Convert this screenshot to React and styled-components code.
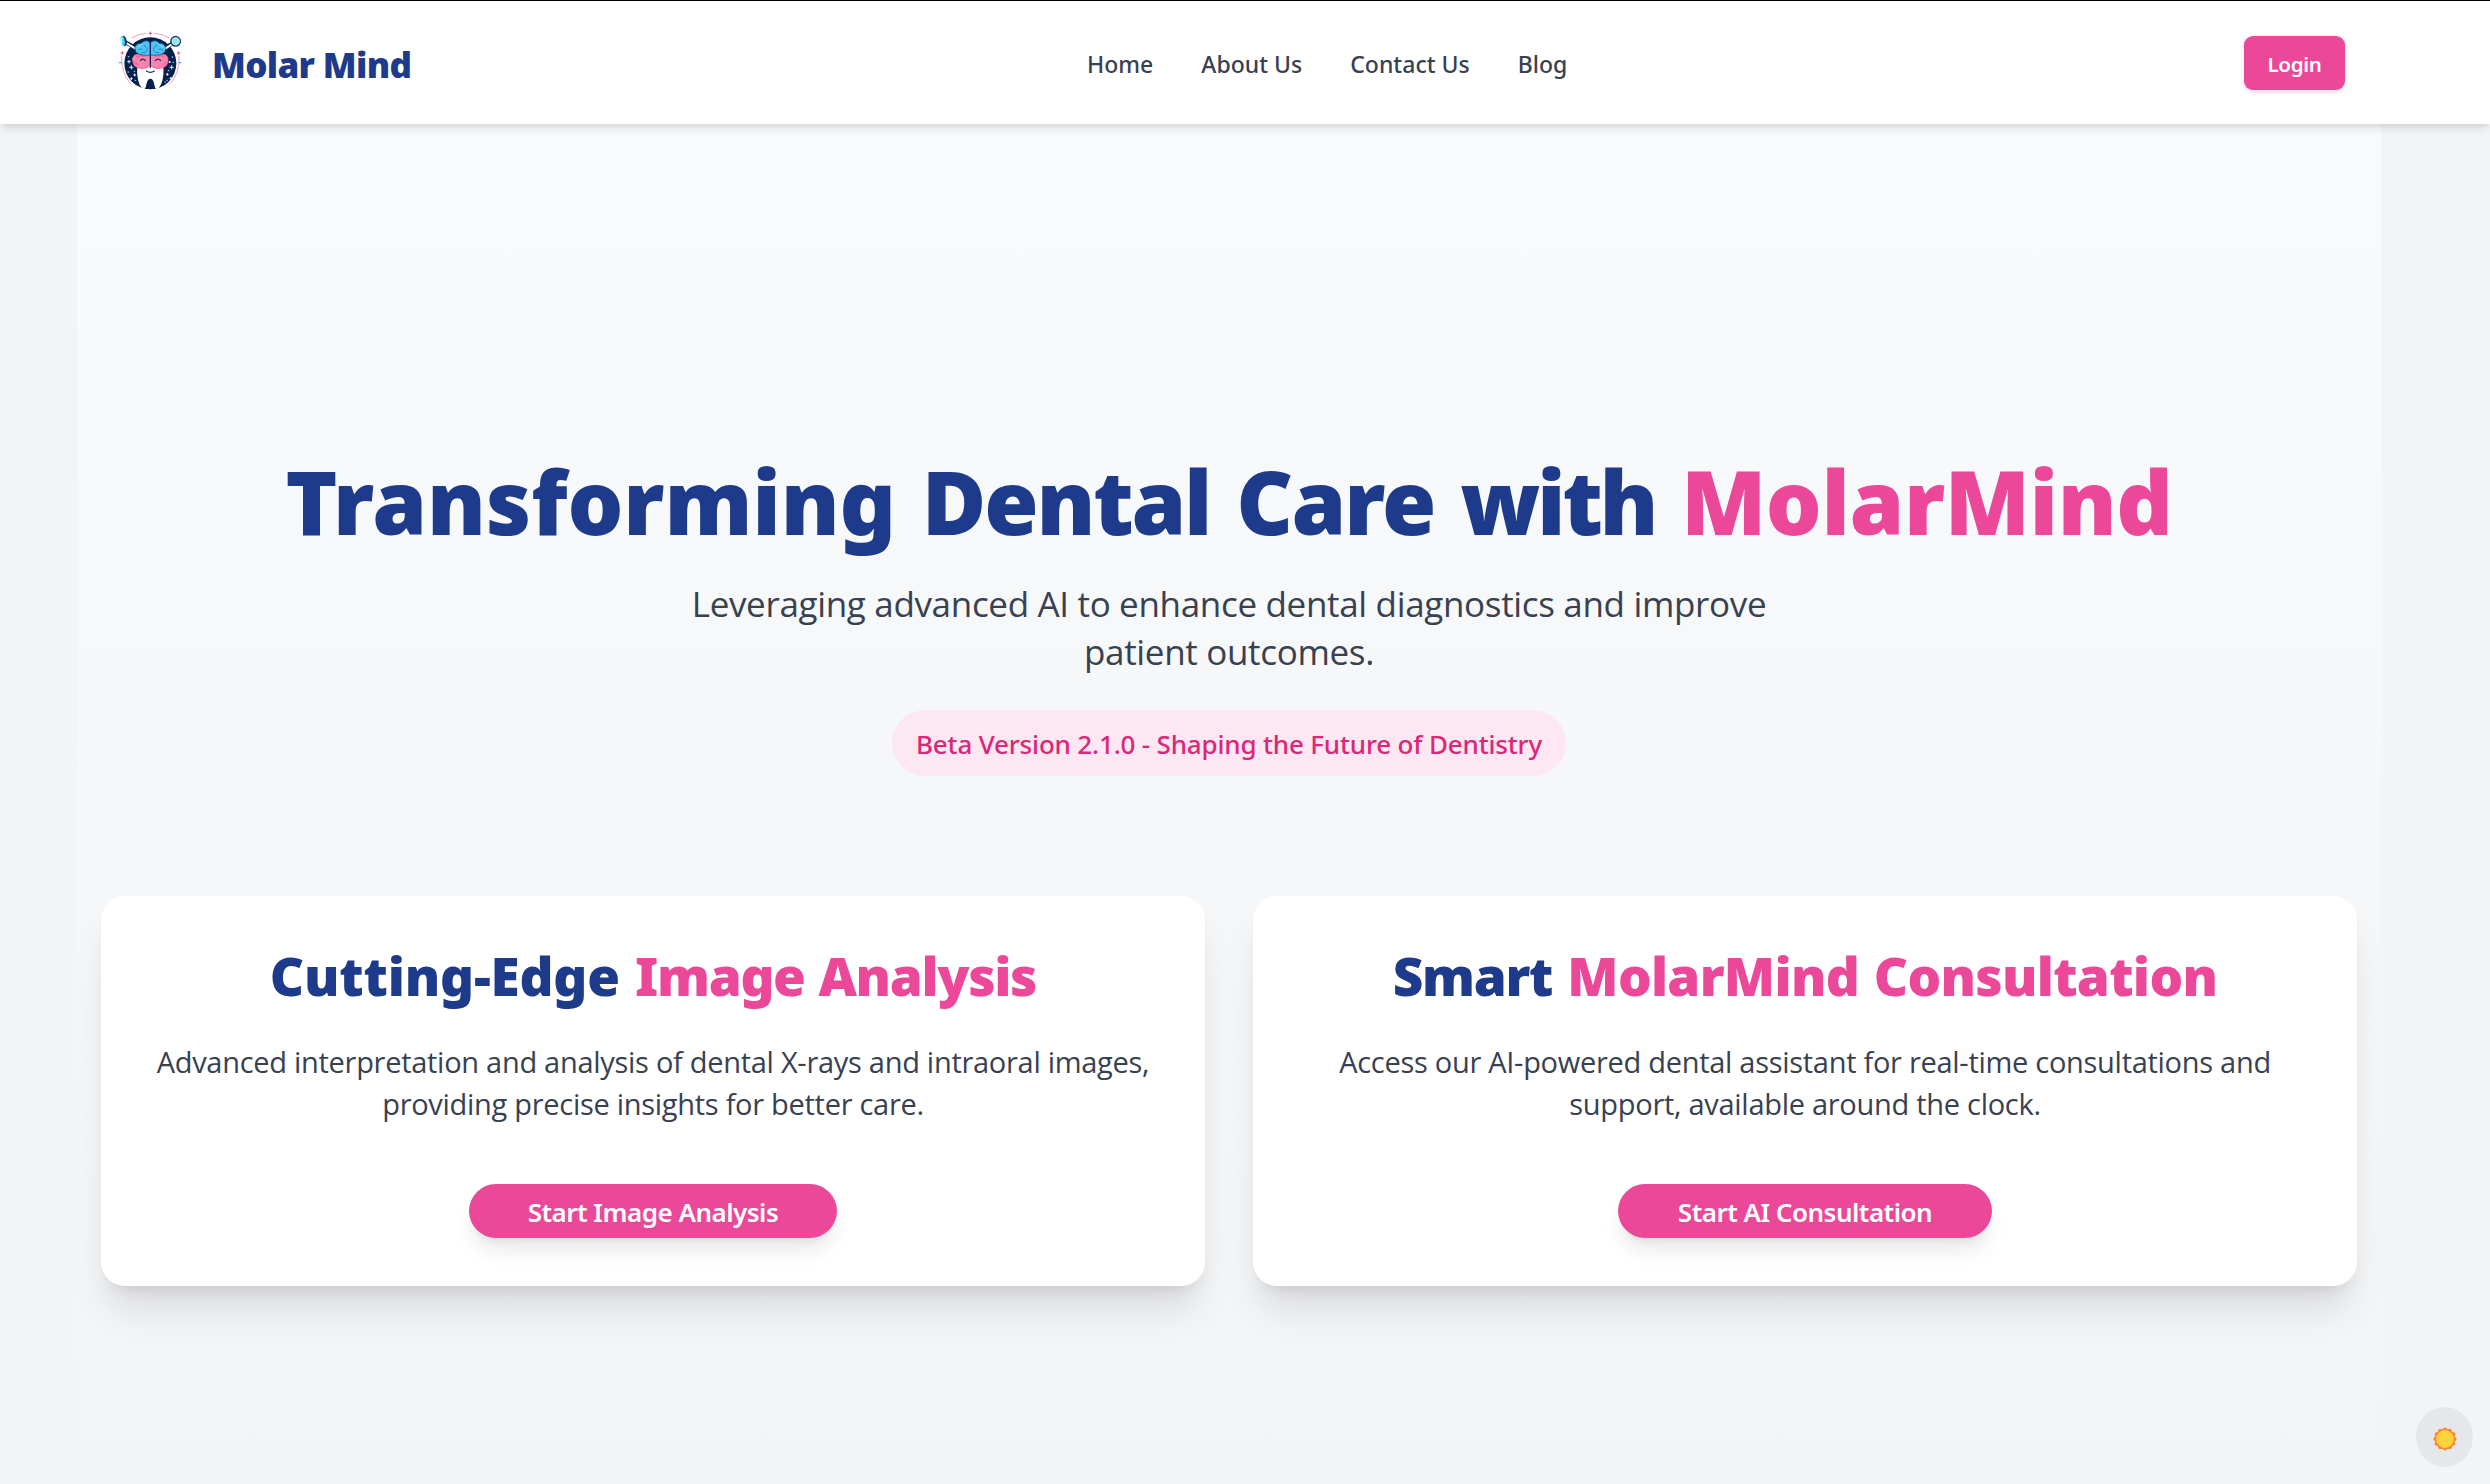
import React from "react";
import styled, { createGlobalStyle } from "styled-components";

const blue = "#1e3a8a";
const pink = "#ec4899";
const slate = "#374151";
const strong = '"Noto Sans", "Open Sans", sans-serif';
const regular = '"Open Sans", "Noto Sans", sans-serif';

const GlobalStyle = createGlobalStyle`
  *, *::before, *::after { box-sizing: border-box; }
  body { margin: 0; background: #f3f4f6; font-family: ${regular}; overflow: hidden; }
`;

const Page = styled.div`
  display: flex;
  flex-direction: column;
  height: 1484px;
  overflow: hidden;
  background: #f3f4f6;
`;

const Header = styled.header`
  z-index: 1;
  flex: none;
  height: 124px;
  border-top: 1px solid #000;
  padding: 0 145px 0 113px;
  display: grid;
  grid-template-columns: 974px 1fr auto;
  align-items: center;
  background: #fff;
  box-shadow: 0 6px 9px -1.5px rgba(0, 0, 0, 0.1), 0 3px 6px -3px rgba(0, 0, 0, 0.1);
`;

const Brand = styled.a`
  display: flex;
  align-items: center;
  gap: 24px;
`;

const LogoMark = styled.svg`
  width: 75px;
  height: 64px;
  margin-bottom: 6px;
`;

const BrandName = styled.span`
  padding-top: 5px;
  color: ${blue};
  font: 900 35px/42px ${strong};
  letter-spacing: -0.66px;
  white-space: nowrap;
`;

const Nav = styled.nav`
  display: flex;
  gap: 48px;
  padding-top: 2px;
`;

const NavLink = styled.a`
  color: ${slate};
  font: 500 23px/36px ${strong};
  letter-spacing: 0.02px;
  white-space: nowrap;
`;

const LoginButton = styled.button`
  width: 101px;
  height: 54px;
  padding: 2px 0 0;
  border: 0;
  border-radius: 9px;
  background: ${pink};
  color: #fff;
  font: 600 20.5px/30px ${strong};
  letter-spacing: -0.3px;
  box-shadow: 0 1.5px 4px rgba(0, 0, 0, 0.14);
`;

const Main = styled.main`
  width: 2304px;
  height: 1360px;
  margin-left: 77px;
  padding: 332px 24px 0;
  background: linear-gradient(to bottom, #f9fafb, #f3f4f6);
`;

const Hero = styled.section`
  display: flex;
  flex-direction: column;
  align-items: center;
  text-align: center;
`;

const Word = styled.span`
  color: ${(p) => (p.$accent ? pink : blue)};
  letter-spacing: ${(p) => p.$track}px;
`;

const Title = styled.h1`
  margin: 0;
  color: ${blue};
  font: 900 88px/90px ${strong};
  word-spacing: 3px;
  white-space: nowrap;
`;

const Lead = styled.p`
  width: 1152px;
  margin: 34px 0 0;
  color: ${slate};
  font: 400 35px/48px ${regular};
  letter-spacing: -0.33px;
`;

const Badge = styled.div`
  height: 66px;
  margin-top: 34px;
  padding: 12px 24px;
  border-radius: 33px;
  background: #fce7f3;
  color: #db2777;
  font: 500 26px/44px ${strong};
  letter-spacing: -0.17px;
  white-space: nowrap;
`;

const Cards = styled.section`
  display: grid;
  grid-template-columns: 1fr 1fr;
  gap: 48px;
  margin-top: 120px;
`;

const Card = styled.article`
  display: flex;
  flex-direction: column;
  align-items: center;
  height: 390px;
  padding: 50px 48px 0;
  border-radius: 24px;
  background: #fff;
  text-align: center;
  box-shadow: 0 30px 37.5px -7.5px rgba(0, 0, 0, 0.1), 0 12px 15px -9px rgba(0, 0, 0, 0.1);
`;

const CardTitle = styled.h2`
  margin: 0;
  color: ${blue};
  font: 900 53px/60px ${strong};
  word-spacing: 1.5px;
  white-space: nowrap;
`;

const CardText = styled.p`
  margin: 35px 0 0;
  color: ${slate};
  font: 400 29px/42px ${regular};
  letter-spacing: -0.285px;
  white-space: nowrap;
`;

const CardButton = styled.button`
  width: ${(p) => p.$width}px;
  height: 54px;
  margin-top: 58.5px;
  padding: 3px 0 0;
  border: 0;
  border-radius: 27px;
  background: ${pink};
  color: #fff;
  font: 600 26px/42px ${strong};
  letter-spacing: -0.5px;
  white-space: nowrap;
  box-shadow: 0 15px 22.5px -4.5px rgba(0, 0, 0, 0.1), 0 6px 9px -6px rgba(0, 0, 0, 0.1);
`;

const ThemeToggle = styled.button`
  position: fixed;
  right: 17px;
  bottom: 17px;
  z-index: 2;
  display: flex;
  align-items: center;
  justify-content: center;
  width: 57px;
  height: 60px;
  padding: 3px 0 0;
  border: 0;
  border-radius: 50%;
  background: #e5e7eb;
`;

const star = (x, y, r = 4) => `M${x - r} ${y}H${x + r}M${x} ${y - r}V${y + r}`;

function Logo() {
  return (
    <LogoMark viewBox="-9 0 225 192" fill="none" strokeLinecap="round" strokeLinejoin="round">
      <g stroke="#f08cab" strokeWidth="2.5">
        <path d="M48 29Q66 18 90 16M116 16Q140 18 158 29M17 84Q14 134 44 168M189 84Q192 134 162 168" />
        <path d={star(103, 16) + star(19, 75) + star(188, 75)} stroke="#e8578b" strokeWidth="3" />
      </g>
      <circle cx="103" cy="106" r="78" fill="#04204c" />
      <path d="M10 104h7M188 104h7" stroke="#35cbe8" strokeWidth="4" />
      <path d="M31 44L54 57M174 44L151 57" stroke="#04204c" strokeWidth="12" />
      <path d="M33 46L57 61M172 46L149 61" stroke="#fff" strokeWidth="6" />
      <ellipse cx="24" cy="39" rx="8" ry="16" fill="#0b3562" transform="rotate(-8 24 39)" />
      <ellipse cx="20" cy="39" rx="6" ry="15" fill="#58d5f2" transform="rotate(-8 20 39)" />
      <path d="M16 32v14" stroke="#d5f7ff" strokeWidth="4" />
      <circle cx="179" cy="40" r="14" fill="#8ce6f6" stroke="#173d68" strokeWidth="5" />
      <circle cx="179" cy="40" r="11" stroke="#d3f7fc" strokeWidth="2" />
      <path
        d="M64 118C61 147 70 182 84 183C94 183 90 155 103 154C116 155 112 183 122 183C136 181 145 147 142 118Q103 106 64 118Z"
        fill="#fff"
      />
      <path d="M88 183C92 168 93 153 103 152C114 153 114 169 118 183Z" fill="#04204c" />
      <path
        d="M102 76C86 78 71 76 57 80C46 87 48 106 57 115C70 124 91 124 102 113ZM104 76C120 78 135 76 149 80C160 87 158 106 149 115C136 124 115 124 104 113Z"
        fill="#fb83ad"
        stroke="#d94f86"
        strokeWidth="2"
      />
      <path d="M53 101Q61 105 65 111M153 101Q145 105 141 111M62 86Q75 80 88 85M144 86Q131 80 118 85" stroke="#ee6598" strokeWidth="3.5" />
      <path
        d="M102 44C94 34 80 39 76 46C63 45 53 56 58 66C58 78 78 84 102 81ZM104 44C112 34 126 39 130 46C143 45 153 56 148 66C148 78 128 84 104 81Z"
        fill="#4fc4f3"
        stroke="#0a3d70"
        strokeWidth="2"
      />
      <path d="M66 66Q71 59 78 64M75 51Q86 47 88 56M78 74Q90 76 93 68V59M140 66Q135 59 128 64M131 51Q120 47 118 56M128 74Q116 76 113 68V59" stroke="#0b82c2" strokeWidth="2.5" />
      <path d="M67 56Q72 49 80 49M126 49Q136 50 140 58" stroke="#96ebff" strokeWidth="3" />
      <path d="M103 40V119" stroke="#062653" strokeWidth="3.5" />
      <path d="M73 98Q80 89 88 98M118 98Q126 89 134 98" stroke="#2b2454" strokeWidth="3.5" />
      <path d="M91 129Q103 137 115 129" stroke="#17345b" strokeWidth="3.5" />
      <path
        d={star(39, 101) + star(46, 118, 5) + star(46, 152, 3) + star(56, 141, 3) + star(167, 118, 5) + star(161, 102, 2) + star(154, 139, 3) + star(165, 151, 3)}
        stroke="#e8f3fb"
        strokeWidth="3"
      />
      <path d="M37 86h1M50 93h1M36 132h1M55 130h1M58 157h1M169 87h1M171 103h1M153 157h1M147 162h1M157 128h1" stroke="#a8c2dc" strokeWidth="4" />
    </LogoMark>
  );
}

function Sun() {
  const rays = Array.from({ length: 12 }, (_, i) => (i * Math.PI) / 6);
  return (
    <svg width="24" height="24" viewBox="0 0 24 24">
      <circle cx="12" cy="12" r="10.3" fill="#ff822d" />
      {rays.map((a) => (
        <circle key={a} cx={12 + 9.6 * Math.sin(a)} cy={12 - 9.6 * Math.cos(a)} r="2" fill="#ff822d" />
      ))}
      <circle cx="12" cy="12" r="8.9" fill="#fdd33c" />
    </svg>
  );
}

const links = ["Home", "About Us", "Contact Us", "Blog"];

const features = [
  {
    lead: "Cutting-Edge",
    leadTrack: -0.2,
    accent: "Image Analysis",
    accentTrack: -1.35,
    text: [
      "Advanced interpretation and analysis of dental X-rays and intraoral images,",
      "providing precise insights for better care.",
    ],
    action: "Start Image Analysis",
    width: 368,
  },
  {
    lead: "Smart",
    leadTrack: -1.3,
    accent: "MolarMind Consultation",
    accentTrack: -0.7,
    text: [
      "Access our AI-powered dental assistant for real-time consultations and",
      "support, available around the clock.",
    ],
    action: "Start AI Consultation",
    width: 374,
  },
];

export default function App() {
  return (
    <>
      <GlobalStyle />
      <Page>
        <Header>
          <Brand>
            <Logo />
            <BrandName>Molar Mind</BrandName>
          </Brand>
          <Nav>
            {links.map((label) => (
              <NavLink key={label}>{label}</NavLink>
            ))}
          </Nav>
          <LoginButton>Login</LoginButton>
        </Header>
        <Main>
          <Hero>
            <Title>
              <Word $track={-0.15}>Transforming</Word> <Word $track={-2.2}>Dental</Word>{" "}
              <Word $track={-1.9}>Care</Word> <Word $track={-3.3}>with</Word>{" "}
              <Word $accent $track={-0.4}>MolarMind</Word>
            </Title>
            <Lead>Leveraging advanced AI to enhance dental diagnostics and improve patient outcomes.</Lead>
            <Badge>Beta Version 2.1.0 - Shaping the Future of Dentistry</Badge>
          </Hero>
          <Cards>
            {features.map((f) => (
              <Card key={f.action}>
                <CardTitle>
                  <Word $track={f.leadTrack}>{f.lead}</Word>{" "}
                  <Word $accent $track={f.accentTrack}>{f.accent}</Word>
                </CardTitle>
                <CardText>
                  {f.text[0]}
                  <br />
                  {f.text[1]}
                </CardText>
                <CardButton $width={f.width}>{f.action}</CardButton>
              </Card>
            ))}
          </Cards>
        </Main>
        <ThemeToggle aria-label="Toggle theme">
          <Sun />
        </ThemeToggle>
      </Page>
    </>
  );
}
